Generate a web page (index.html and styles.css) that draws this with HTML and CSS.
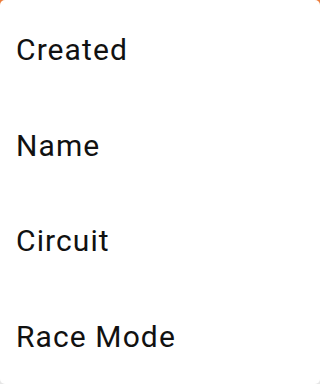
FILE: index.html
```html
<!DOCTYPE html>
<html>
<head>
<meta charset="utf-8">
<link rel="stylesheet" href="styles.css">
</head>
<body>
<div class="menu">
  <div class="item">Created</div>
  <div class="item">Name</div>
  <div class="item">Circuit</div>
  <div class="item">Race Mode</div>
</div>
</body>
</html>
```
FILE: styles.css
```css
html, body {
  margin: 0;
  padding: 0;
  height: 100%;
}
body {
  background: linear-gradient(to bottom, #ec7d3c 0, #ec7d3c 10px, #e6e6e6 10px);
  font-family: Roboto, "Noto Sans", sans-serif;
}
.menu {
  height: 100%;
  box-sizing: border-box;
  background: #ffffff;
  border-radius: 5px;
  padding-top: 2px;
  display: flex;
  flex-direction: column;
}
.item {
  height: 96px;
  display: flex;
  align-items: center;
  padding-left: 16px;
  font-size: 30px;
  letter-spacing: 1.1px;
  color: #111111;
}
```
